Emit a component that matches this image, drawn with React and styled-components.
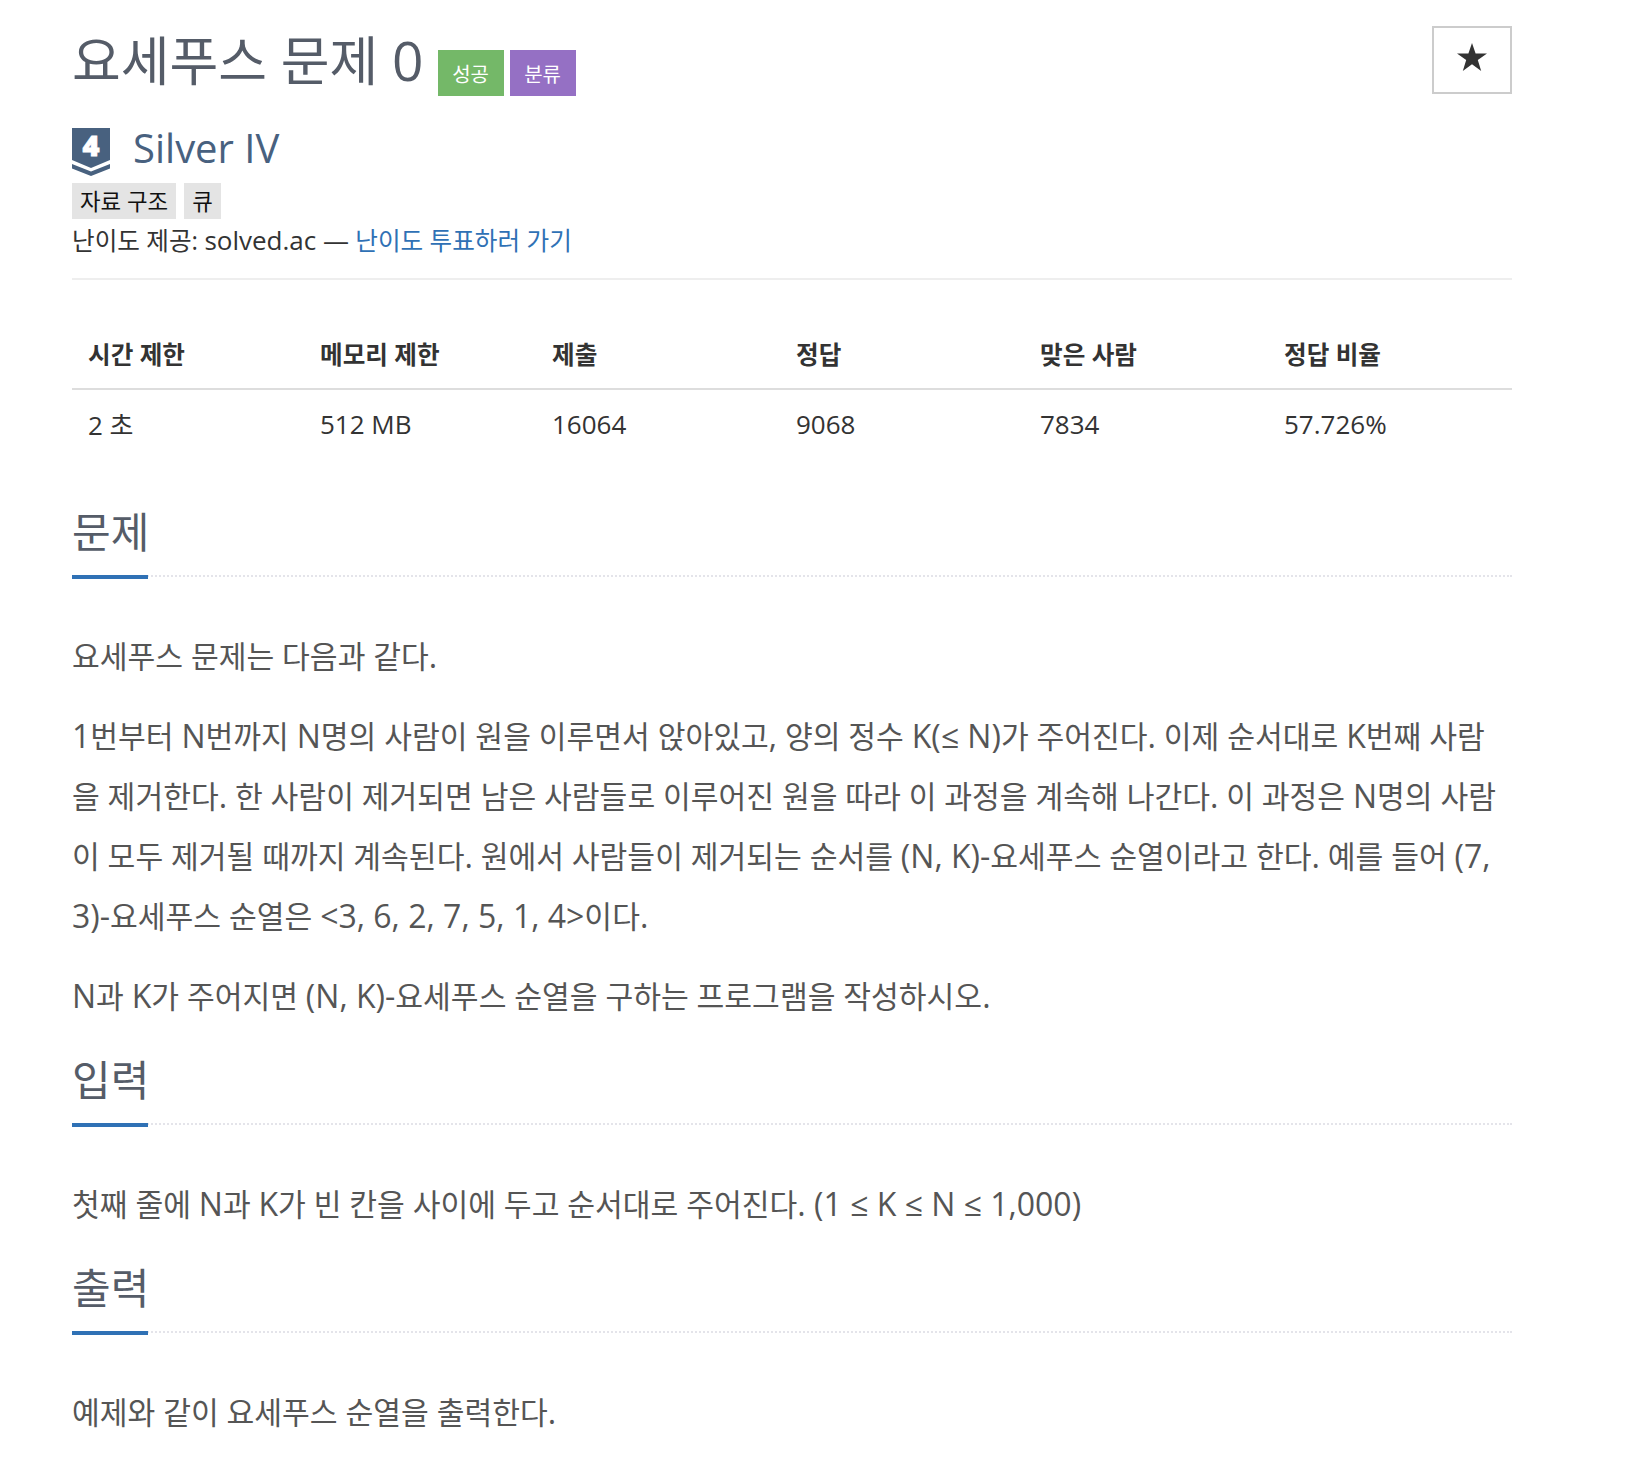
import React from 'react';
import styled, { createGlobalStyle } from 'styled-components';

const Global = createGlobalStyle`
  * { box-sizing: border-box; }
  html, body { margin: 0; padding: 0; background: #fff; }
  body {
    color: #333;
    font-family: "Open Sans", "Noto Sans CJK KR", sans-serif;
    font-size: 26px;
  }
`;

const Page = styled.div`
  width: 1626px;
  height: 1470px;
  overflow: hidden;
  padding: 0 114px 0 72px;
`;

const TitleRow = styled.div`
  display: flex;
  align-items: flex-start;
  justify-content: space-between;
  height: 126px;
  padding-top: 26px;
`;

const TitleGroup = styled.div`
  display: flex;
  align-items: flex-start;
`;

const Title = styled.h1`
  margin: 0 14px 0 0;
  font-size: 53px;
  line-height: 68px;
  font-weight: 400;
  color: #555c68;
`;

const TitleNumber = styled.span`
  font-size: 55px;
`;

const Label = styled.span`
  display: flex;
  align-items: center;
  justify-content: center;
  width: 66px;
  height: 46px;
  margin: 24px 6px 0 0;
  color: #fff;
  font-size: 20px;
  background: ${(p) => p.$bg};
`;

const StarButton = styled.div`
  display: flex;
  align-items: center;
  justify-content: center;
  width: 80px;
  height: 68px;
  padding-bottom: 6px;
  border: 2px solid #ccc;
`;

const TierRow = styled.div`
  display: flex;
  align-items: flex-start;
  gap: 23px;
  height: 57px;
  padding-top: 2px;
`;

const TierName = styled.span`
  font-size: 40px;
  line-height: 40px;
  color: #48617f;
`;

const Tags = styled.div`
  display: flex;
  gap: 8px;
  height: 36px;
`;

const Tag = styled.span`
  display: flex;
  align-items: center;
  height: 36px;
  padding: 0 8px 2px;
  background: #e4e4e4;
  color: #111;
  font-size: 22.4px;
`;

const Credit = styled.div`
  height: 61px;
  padding-top: 1px;
  line-height: 40px;
  font-size: 24.6px;
  border-bottom: 2px solid #eee;
  a { color: #2f71b5; text-decoration: none; }
`;

const CreditLatin = styled.span`
  font-size: 26px;
`;

const Stats = styled.div`
  margin-top: 50px;
`;

const StatsRow = styled.div`
  display: grid;
  grid-template-columns: 232px 232px 244px 244px 244px 244px;
  height: ${(p) => p.$h}px;
  align-items: center;
  padding-bottom: ${(p) => (p.$head ? 12 : 0)}px;
  border-bottom: ${(p) => (p.$head ? '2px solid #ddd' : 'none')};
`;

const HeadCell = styled.div`
  padding-left: 16px;
  font-size: 24.6px;
  font-weight: 700;
`;

const Cell = styled.div`
  padding-left: 16px;
  font-size: 26px;
`;

const Section = styled.section`
  margin-top: ${(p) => p.$top}px;
`;

const Heading = styled.div`
  height: 73px;
  border-bottom: 2px dotted #e4e4ea;
`;

const HeadingText = styled.h2`
  display: inline-block;
  margin: 0;
  height: 73px;
  width: 76px;
  font-size: 42px;
  line-height: 56px;
  font-weight: 400;
  color: #555c68;
  white-space: nowrap;
  box-shadow: 0 2px 0 #2f71b5;
  border-bottom: 2px solid #2f71b5;
`;

const Body = styled.div`
  padding-top: ${(p) => p.$top}px;
`;

const Para = styled.p`
  margin: 0 0 20px;
  max-width: 1436px;
  font-size: 30.2px;
  line-height: 60px;
  color: #555;
`;

const Latin = styled.span`
  font-size: 32px;
  line-height: 0;
`;

// latin runs sit a little larger than the hangul around them
const latinRun = /([A-Za-z0-9(),.<>≤-]+(?: [A-Za-z0-9(),.<>≤-]+)*)/;

const Text = ({ children }) => (
  <Para>
    {children.split(latinRun).map((part, i) => (i % 2 ? <Latin key={i}>{part}</Latin> : part))}
  </Para>
);

const BadgeSvg = styled.svg`
  overflow: visible;
  flex: none;
`;

const Badge = () => (
  <BadgeSvg width="38" height="48" viewBox="0 0 38 48">
    <path d="M0 0H38V32L19 40L0 32Z" fill="#48617f" />
    <path d="M0 36L19 43.5L38 36V40.5L19 48L0 40.5Z" fill="#48617f" />
    <text x="19" y="28" textAnchor="middle" fill="#fff" stroke="#fff" strokeWidth="0.8" fontSize="29" fontWeight="800" fontFamily="Open Sans, sans-serif">4</text>
  </BadgeSvg>
);

const Star = () => (
  <svg width="30" height="28" viewBox="0 0 30 28">
    <path d="M15 0L18.6 10.4H30L20.8 17L24.2 28L15 21.2L5.8 28L9.2 17L0 10.4H11.4Z" fill="#333" />
  </svg>
);

const heads = ['시간 제한', '메모리 제한', '제출', '정답', '맞은 사람', '정답 비율'];
const values = ['2 초', '512 MB', '16064', '9068', '7834', '57.726%'];

export default function App() {
  return (
    <Page>
      <Global />
      <TitleRow>
        <TitleGroup>
          <Title>요세푸스 문제 <TitleNumber>0</TitleNumber></Title>
          <Label $bg="#74b868">성공</Label>
          <Label $bg="#9570c4">분류</Label>
        </TitleGroup>
        <StarButton><Star /></StarButton>
      </TitleRow>
      <TierRow>
        <Badge />
        <TierName>Silver IV</TierName>
      </TierRow>
      <Tags>
        <Tag>자료 구조</Tag>
        <Tag>큐</Tag>
      </Tags>
      <Credit>난이도 제공: <CreditLatin>solved.ac —</CreditLatin> <a href="#v">난이도 투표하러 가기</a></Credit>
      <Stats>
        <StatsRow $head $h={60}>
          {heads.map((h) => <HeadCell key={h}>{h}</HeadCell>)}
        </StatsRow>
        <StatsRow $h={68}>
          {values.map((v) => <Cell key={v}>{v}</Cell>)}
        </StatsRow>
      </Stats>
      <Section $top={46}>
        <Heading><HeadingText>문제</HeadingText></Heading>
        <Body $top={50}>
          <Text>요세푸스 문제는 다음과 같다.</Text>
          <Text>1번부터 N번까지 N명의 사람이 원을 이루면서 앉아있고, 양의 정수 K(≤ N)가 주어진다. 이제 순서대로 K번째 사람을 제거한다. 한 사람이 제거되면 남은 사람들로 이루어진 원을 따라 이 과정을 계속해 나간다. 이 과정은 N명의 사람이 모두 제거될 때까지 계속된다. 원에서 사람들이 제거되는 순서를 (N, K)-요세푸스 순열이라고 한다. 예를 들어 (7, 3)-요세푸스 순열은 &lt;3, 6, 2, 7, 5, 1, 4&gt;이다.</Text>
          <Text>N과 K가 주어지면 (N, K)-요세푸스 순열을 구하는 프로그램을 작성하시오.</Text>
        </Body>
      </Section>
      <Section $top={25}>
        <Heading><HeadingText>입력</HeadingText></Heading>
        <Body $top={50}>
          <Text>첫째 줄에 N과 K가 빈 칸을 사이에 두고 순서대로 주어진다. (1 ≤ K ≤ N ≤ 1,000)</Text>
        </Body>
      </Section>
      <Section $top={25}>
        <Heading><HeadingText>출력</HeadingText></Heading>
        <Body $top={50}>
          <Text>예제와 같이 요세푸스 순열을 출력한다.</Text>
        </Body>
      </Section>
    </Page>
  );
}
